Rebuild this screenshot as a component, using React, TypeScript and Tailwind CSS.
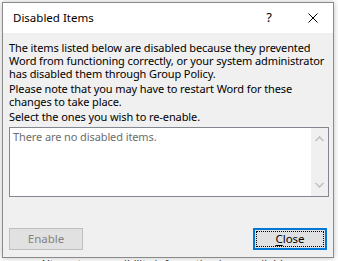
export default function App() {
  const font = { fontFamily: '"Noto Sans", "Segoe UI", sans-serif' }
  return (
    <div className="w-[338px] h-[261px] bg-white overflow-hidden relative" style={font}>
      <div className="absolute left-[40px] top-[257px] text-[11px] text-[#333] whitespace-nowrap leading-[14px]">
        Alternate accessibility information is unavailable
      </div>
      <div className="relative ml-[2px] mt-[2px] w-[332px] h-[256px] border border-[#8a8a8a] bg-[#f0f0f0] flex flex-col shadow-[0_0_6px_rgba(0,0,0,0.25)]">
        <div className="h-[30px] bg-white flex items-center pl-[10px] text-[11.5px] text-black shrink-0">
          <span className="flex-1">Disabled Items</span>
          <span className="w-[20px] text-center mr-[29px] text-[13px]">?</span>
          <svg width="10" height="10" viewBox="0 0 10 10" className="mr-[15px]">
            <path d="M0.5 0.5 L9.5 9.5 M9.5 0.5 L0.5 9.5" stroke="#000" strokeWidth="1" />
          </svg>
        </div>
        <div className="flex-1 flex flex-col pl-[6px] pr-[4px] pt-[8px] text-[11px] text-black">
          <div className="leading-[13px] whitespace-nowrap tracking-[-0.1px]">
            <div>The items listed below are disabled because they prevented</div>
            <div>Word from functioning correctly, or your system administrator</div>
            <div>has disabled them through Group Policy.</div>
          </div>
          <div className="mt-[2px] leading-[13px] whitespace-nowrap tracking-[-0.1px]">
            <div>Please note that you may have to restart Word for these</div>
            <div>changes to take place.</div>
          </div>
          <div className="mt-[2px] leading-[13px] whitespace-nowrap tracking-[-0.1px]">Select the ones you wish to re-enable.</div>
          <div className="mt-[4px] w-[320px] h-[70px] border border-[#828790] bg-white flex">
            <div className="flex-1 pl-[3px] pt-[2px] text-[11px] leading-[14px] text-[#6d6d6d] tracking-[-0.1px]">
              There are no disabled items.
            </div>
            <div className="w-[17px] bg-[#f0f0f0] flex flex-col items-center justify-between py-[8px]">
              <svg width="9" height="6" viewBox="0 0 9 6">
                <path d="M0.5 5 L4.5 1 L8.5 5" stroke="#bfbfbf" strokeWidth="1.5" fill="none" />
              </svg>
              <svg width="9" height="6" viewBox="0 0 9 6">
                <path d="M0.5 1 L4.5 5 L8.5 1" stroke="#bfbfbf" strokeWidth="1.5" fill="none" />
              </svg>
            </div>
          </div>
          <div className="flex justify-between mt-[31px] pr-[2px]">
            <div className="w-[74px] h-[22px] border border-[#bfbfbf] bg-[#e1e1e1] flex items-center justify-center text-[11.5px] text-[#838383]">
              Enable
            </div>
            <div className="w-[74px] h-[22px] border-2 border-[#0078d7] bg-[#e1e1e1] p-[1px]">
              <div className="w-full h-full border border-dotted border-black flex items-center justify-center text-[11.5px] text-black">
                <span><span className="underline underline-offset-[2px]">C</span>lose</span>
              </div>
            </div>
          </div>
        </div>
      </div>
    </div>
  )
}
